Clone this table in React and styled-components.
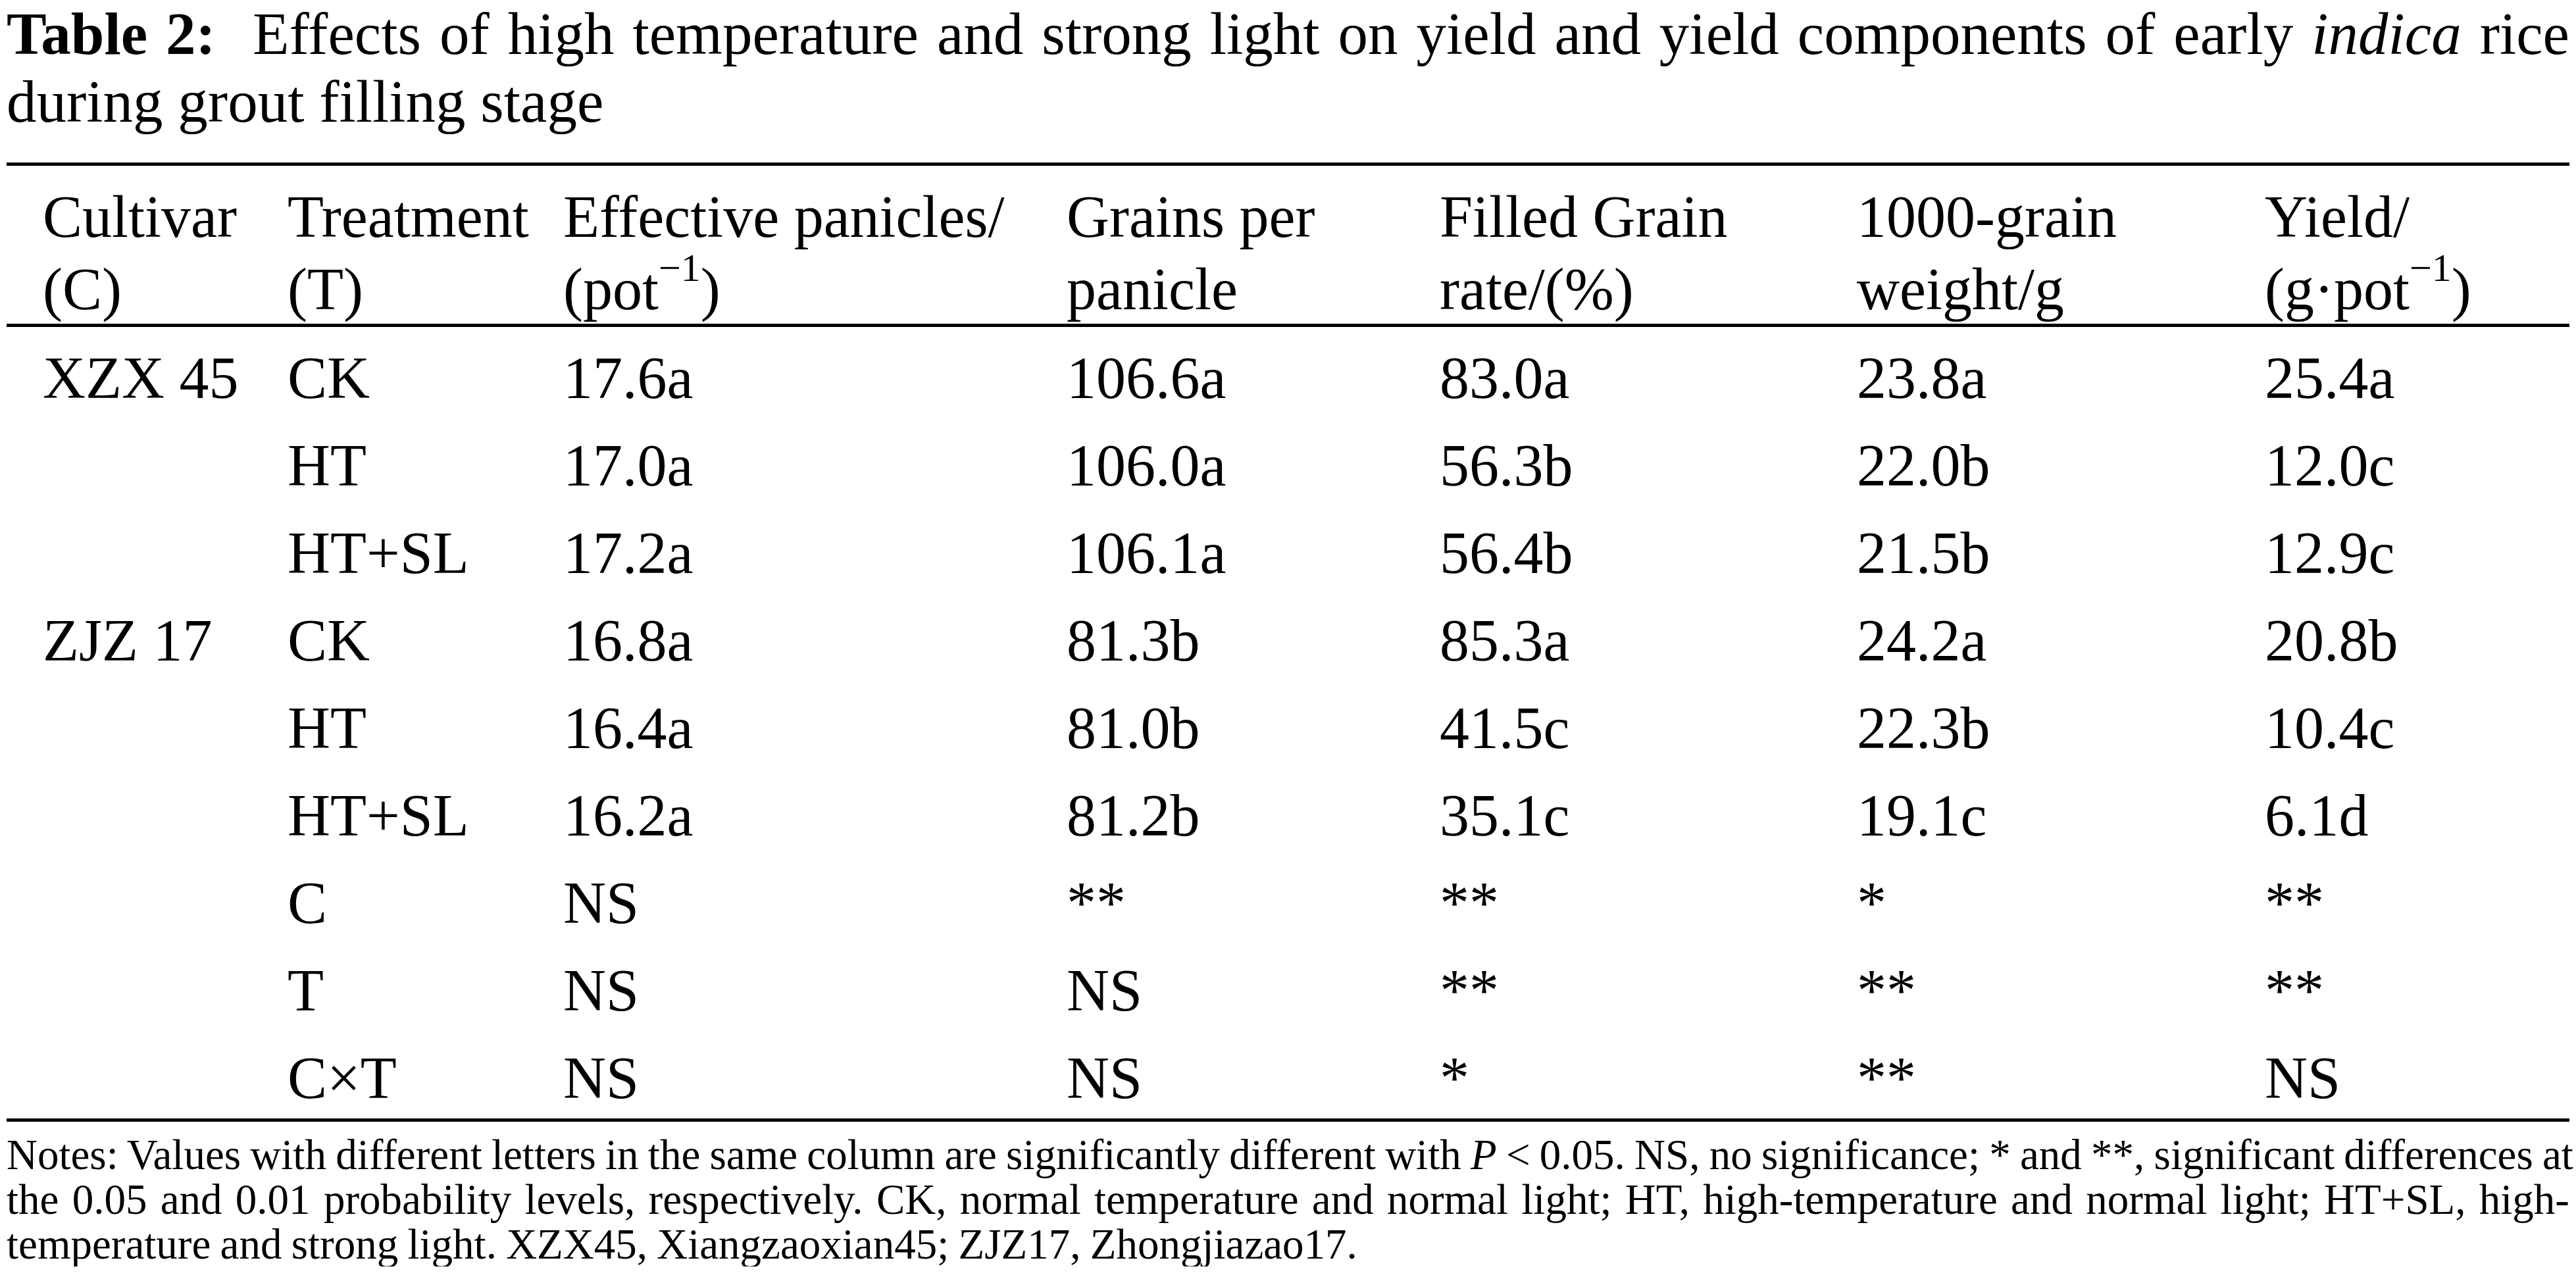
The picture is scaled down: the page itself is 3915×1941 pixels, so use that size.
import React from 'react';
import styled, { createGlobalStyle } from 'styled-components';

const GlobalStyle = createGlobalStyle`
  * {
    box-sizing: border-box;
  }
  body {
    margin: 0;
    background: #fff;
    color: #000;
    font-family: 'Liberation Serif', 'Times New Roman', serif;
  }
`;

// column widths measured off the reference (first column minus the row padding)
const COLUMNS = '372px 419px 765px 567px 634px 620px 1fr';

const Page = styled.div`
  width: 3915px;
  padding: 0 10px;
`;

const Caption = styled.h2`
  margin: 0;
  font-size: 91px;
  line-height: 103px;
  font-weight: normal;
  text-align: justify;
`;

const Label = styled.b`
  font-weight: bold;
`;

const Table = styled.div`
  margin-top: 41px;
  border-top: 5px solid #000;
  border-bottom: 5px solid #000;
  font-size: 90px;
`;

const HeadRow = styled.div`
  display: grid;
  grid-template-columns: ${COLUMNS};
  height: 245px;
  padding: 23px 0 0 55px;
  line-height: 110px;
  border-bottom: 5px solid #000;
`;

const Body = styled.div`
  padding-top: 6px;
`;

const Row = styled.div`
  display: grid;
  grid-template-columns: ${COLUMNS};
  height: 133px;
  padding: 10px 0 0 55px;
  line-height: 123px;
`;

const Cell = styled.div`
  white-space: nowrap;
`;

const Sup = styled.sup`
  font-size: 60px;
  line-height: 0;
  vertical-align: 43px;
`;

const Notes = styled.div`
  margin-top: 16px;
  font-size: 65px;
  line-height: 68px;
  word-spacing: -2px;
`;

// each typeset line of the footnote is stretched to the full width, except the last
const NoteLine = styled.div`
  white-space: nowrap;
  text-align: ${(props) => (props.$last ? 'left' : 'justify')};
  text-align-last: ${(props) => (props.$last ? 'left' : 'justify')};
`;

const headers = [
  ['Cultivar', '(C)'],
  ['Treatment', '(T)'],
  [
    'Effective panicles/',
    <>
      (pot<Sup>−1</Sup>)
    </>,
  ],
  ['Grains per', 'panicle'],
  ['Filled Grain', 'rate/(%)'],
  ['1000-grain', 'weight/g'],
  [
    'Yield/',
    <>
      (g·pot<Sup>−1</Sup>)
    </>,
  ],
];

const rows = [
  ['XZX 45', 'CK', '17.6a', '106.6a', '83.0a', '23.8a', '25.4a'],
  ['', 'HT', '17.0a', '106.0a', '56.3b', '22.0b', '12.0c'],
  ['', 'HT+SL', '17.2a', '106.1a', '56.4b', '21.5b', '12.9c'],
  ['ZJZ 17', 'CK', '16.8a', '81.3b', '85.3a', '24.2a', '20.8b'],
  ['', 'HT', '16.4a', '81.0b', '41.5c', '22.3b', '10.4c'],
  ['', 'HT+SL', '16.2a', '81.2b', '35.1c', '19.1c', '6.1d'],
  ['', 'C', 'NS', '**', '**', '*', '**'],
  ['', 'T', 'NS', 'NS', '**', '**', '**'],
  ['', 'C×T', 'NS', 'NS', '*', '**', 'NS'],
];

const App = () => {
  return (
    <Page>
      <GlobalStyle />
      <Caption>
        <Label>Table 2:</Label>
        {'\u00a0 Effects of high temperature and strong light on yield and yield components of early '}
        <i>indica</i>
        {' rice '}
        <span>during grout filling stage</span>
      </Caption>

      <Table>
        <HeadRow>
          {headers.map(([top, bottom], i) => (
            <Cell key={i}>
              {top}
              <br />
              {bottom}
            </Cell>
          ))}
        </HeadRow>

        <Body>
          {rows.map((row, r) => (
            <Row key={r}>
              {row.map((value, c) => (
                <Cell key={c}>{value}</Cell>
              ))}
            </Row>
          ))}
        </Body>
      </Table>

      <Notes>
        <NoteLine>
          Notes: Values with different letters in the same column are significantly
          different with <i>P</i> &lt; 0.05. NS, no significance; * and **, significant
          differences at
        </NoteLine>
        <NoteLine>
          the 0.05 and 0.01 probability levels, respectively. CK, normal temperature and
          normal light; HT, high-temperature and normal light; HT+SL, high-
        </NoteLine>
        <NoteLine $last>
          temperature and strong light. XZX45, Xiangzaoxian45; ZJZ17, Zhongjiazao17.
        </NoteLine>
      </Notes>
    </Page>
  );
};

export default App;
